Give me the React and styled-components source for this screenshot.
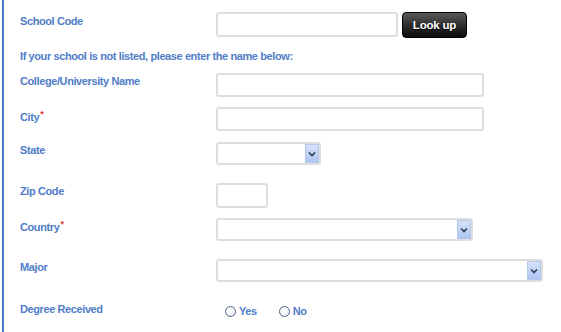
import React from "react";
import styled, { createGlobalStyle } from "styled-components";

const GlobalStyle = createGlobalStyle`
  body {
    margin: 0;
    background: #fff;
    font-family: "Liberation Sans", Arial, sans-serif;
  }
`;

const Panel = styled.div`
  margin-left: 2px;
  border-left: 2px solid #4a7bc8;
  padding: 12px 0 20px 16px;
  height: 300px;
`;

const Row = styled.div`
  display: flex;
  align-items: flex-start;
  margin-top: ${({ space }) => space || 0}px;
`;

const Label = styled.label`
  width: 196px;
  flex: none;
  padding-top: ${({ pad }) => (pad == null ? 3 : pad)}px;
  font-size: 11px;
  letter-spacing: -0.4px;
  line-height: 12px;
  font-weight: bold;
  color: #4f7dc8;
`;

const Note = styled.div`
  margin-top: 12px;
  font-size: 11px;
  letter-spacing: -0.4px;
  line-height: 12px;
  font-weight: bold;
  color: #4f7dc8;
`;

const Required = styled.sup`
  color: #e2342d;
  font-size: 9px;
  line-height: 0;
  vertical-align: 4px;
  margin-left: 1px;
`;

const TextBox = styled.div`
  box-sizing: border-box;
  width: ${({ w }) => w}px;
  height: ${({ h }) => h || 24}px;
  border: 2px solid #dedede;
  border-radius: 3px;
  background: #fff;
`;

const SelectBox = styled.div`
  box-sizing: border-box;
  width: ${({ w }) => w}px;
  height: 23px;
  border: 2px solid #dedede;
  border-radius: 3px;
  background: #fff;
  display: flex;
  justify-content: flex-end;
`;

const DropButton = styled.div`
  width: 14px;
  height: 19px;
  box-sizing: border-box;
  border: 1px solid #b4c8ee;
  background: linear-gradient(#d6e2fa, #aec5f1);
  display: flex;
  align-items: center;
  justify-content: center;
`;

const LookUp = styled.button`
  margin-left: 4px;
  width: 65px;
  height: 26px;
  border: 1px solid #000;
  border-radius: 4px;
  background: linear-gradient(#5a5a5a, #2a2a2a 55%, #0c0c0c);
  color: #fff;
  font-family: "Liberation Sans", Arial, sans-serif;
  font-weight: bold;
  font-size: 11.5px;
  letter-spacing: -0.2px;
  text-shadow: 0 1px 1px #000;
  padding: 0;
`;

const RadioGroup = styled.div`
  display: flex;
  align-items: center;
  margin-left: 9px;
  padding-top: 3px;
  gap: 22px;
`;

const RadioItem = styled.label`
  display: flex;
  align-items: center;
  gap: 3px;
  font-size: 11px;
  letter-spacing: -0.4px;
  font-weight: bold;
  color: #4f7dc8;
  line-height: 12px;
`;

const RadioDot = styled.span`
  width: 11px;
  height: 11px;
  box-sizing: border-box;
  border-radius: 50%;
  border: 1.5px solid #4e6487;
  background: radial-gradient(circle at 40% 35%, #fff, #e6ecf4);
`;

const Chevron = () => (
  <svg width="8" height="6" viewBox="0 0 8 6">
    <polyline points="1,1.5 4,4.5 7,1.5" fill="none" stroke="#2b3a55" strokeWidth="1.6" />
  </svg>
);

const Select = ({ w }) => (
  <SelectBox w={w}>
    <DropButton>
      <Chevron />
    </DropButton>
  </SelectBox>
);

export default function App() {
  return (
    <>
      <GlobalStyle />
      <Panel>
        <Row>
          <Label pad={3}>School Code</Label>
          <TextBox w={182} h={25} />
          <LookUp>Look up</LookUp>
        </Row>
        <Note>If your school is not listed, please enter the name below:</Note>
        <Row space={11}>
          <Label pad={2}>College/University Name</Label>
          <TextBox w={268} />
        </Row>
        <Row space={10}>
          <Label pad={4}>
            City<Required>*</Required>
          </Label>
          <TextBox w={268} />
        </Row>
        <Row space={11}>
          <Label pad={2}>State</Label>
          <Select w={105} />
        </Row>
        <Row space={18}>
          <Label pad={2}>Zip Code</Label>
          <TextBox w={52} h={25} />
        </Row>
        <Row space={10}>
          <Label pad={3}>
            Country<Required>*</Required>
          </Label>
          <Select w={257} />
        </Row>
        <Row space={18}>
          <Label pad={2}>Major</Label>
          <Select w={327} />
        </Row>
        <Row space={20}>
          <Label pad={1}>Degree Received</Label>
          <RadioGroup>
            <RadioItem>
              <RadioDot />
              Yes
            </RadioItem>
            <RadioItem>
              <RadioDot />
              No
            </RadioItem>
          </RadioGroup>
        </Row>
      </Panel>
    </>
  );
}
